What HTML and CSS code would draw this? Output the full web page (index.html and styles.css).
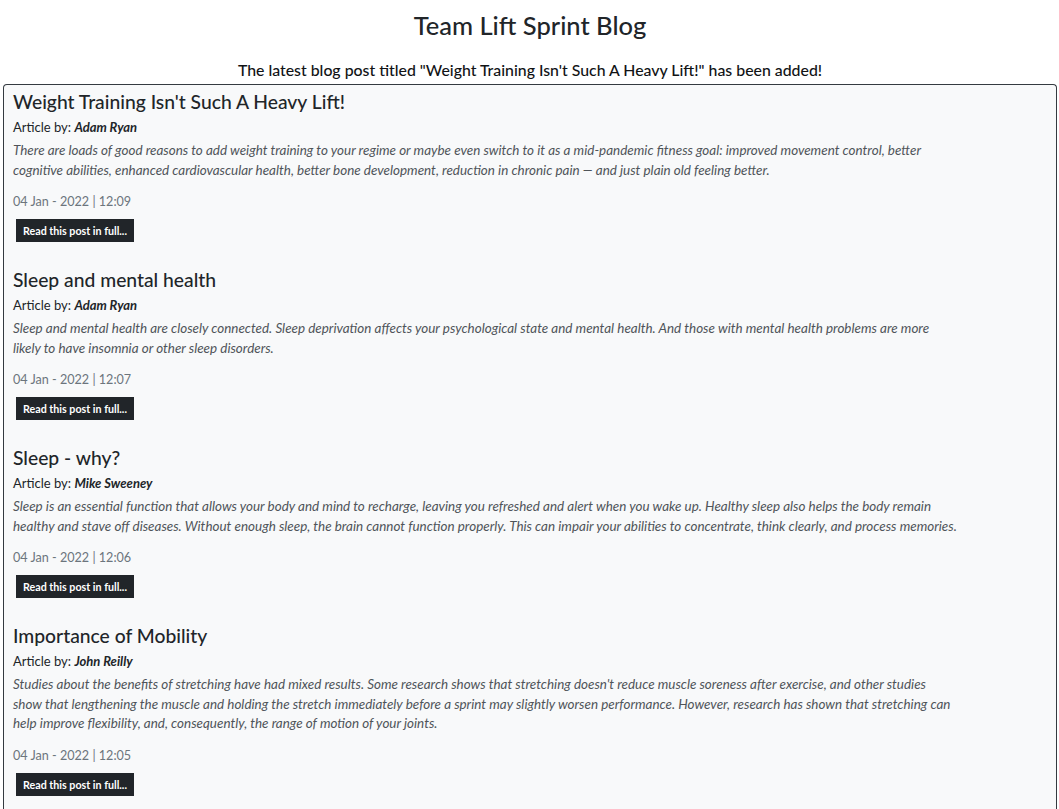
FILE: index.html
```html
<!DOCTYPE html>
<html lang="en">
<head>
<meta charset="utf-8">
<title>Team Lift Sprint Blog</title>
<link rel="stylesheet" href="styles.css">
</head>
<body>
<header class="page-head">
  <h1 class="site-title">Team Lift Sprint Blog</h1>
  <p class="notice">The latest blog post titled "Weight Training Isn't Such A Heavy Lift!" has been added!</p>
</header>
<main class="posts">
  <article class="post">
    <h2 class="post-title">Weight Training Isn't Such A Heavy Lift!</h2>
    <p class="author">Article by: <em>Adam Ryan</em></p>
    <p class="excerpt">There are loads of good reasons to add weight training to your regime or maybe even switch to it as a mid-pandemic fitness goal: improved movement control, better cognitive abilities, enhanced cardiovascular health, better bone development, reduction in chronic pain — and just plain old feeling better.</p>
    <p class="date">04 Jan - 2022 | 12:09</p>
    <a class="btn" href="#">Read this post in full...</a>
  </article>
  <article class="post">
    <h2 class="post-title">Sleep and mental health</h2>
    <p class="author">Article by: <em>Adam Ryan</em></p>
    <p class="excerpt">Sleep and mental health are closely connected. Sleep deprivation affects your psychological state and mental health. And those with mental health problems are more likely to have insomnia or other sleep disorders.</p>
    <p class="date">04 Jan - 2022 | 12:07</p>
    <a class="btn" href="#">Read this post in full...</a>
  </article>
  <article class="post">
    <h2 class="post-title">Sleep - why?</h2>
    <p class="author">Article by: <em>Mike Sweeney</em></p>
    <p class="excerpt">Sleep is an essential function that allows your body and mind to recharge, leaving you refreshed and alert when you wake up. Healthy sleep also helps the body remain healthy and stave off diseases. Without enough sleep, the brain cannot function properly. This can impair your abilities to concentrate, think clearly, and process memories.</p>
    <p class="date">04 Jan - 2022 | 12:06</p>
    <a class="btn" href="#">Read this post in full...</a>
  </article>
  <article class="post">
    <h2 class="post-title">Importance of Mobility</h2>
    <p class="author">Article by: <em>John Reilly</em></p>
    <p class="excerpt">Studies about the benefits of stretching have had mixed results. Some research shows that stretching doesn't reduce muscle soreness after exercise, and other studies show that lengthening the muscle and holding the stretch immediately before a sprint may slightly worsen performance. However, research has shown that stretching can help improve flexibility, and, consequently, the range of motion of your joints.</p>
    <p class="date">04 Jan - 2022 | 12:05</p>
    <a class="btn" href="#">Read this post in full...</a>
  </article>
</main>
</body>
</html>
```
FILE: styles.css
```css
html, body {
  margin: 0;
  padding: 0;
  background: #ffffff;
}
body {
  font-family: Lato, "Liberation Sans", sans-serif;
  color: #212529;
  padding: 0 2px 0 3px;
}
.page-head {
  text-align: center;
  padding-top: 7px;
}
.site-title {
  margin: 0;
  font-size: 25.5px;
  font-weight: 500;
  line-height: 36px;
}
.notice {
  margin: 16px 0 0;
  font-size: 15.85px;
  font-weight: 500;
  line-height: 22px;
  color: #111315;
}
.posts {
  margin-top: 3px;
  background: #f8f9fa;
  border: 1px solid #343a40;
  border-bottom: none;
  border-radius: 4px 4px 0 0;
  padding: 5px 9px 40px;
  display: flex;
  flex-direction: column;
  gap: 26px;
}
.post {
  display: flex;
  flex-direction: column;
  align-items: flex-start;
}
.post-title {
  margin: 0;
  font-size: 19.3px;
  font-weight: 500;
  line-height: 24px;
}
.author {
  margin: 3px 0 0;
  font-size: 13px;
  line-height: 20px;
}
.author em {
  font-weight: 700;
}
.excerpt {
  margin: 4px 0 0;
  max-width: 944.5px;
  font-size: 13.45px;
  line-height: 19.5px;
  font-style: italic;
  color: #4f5459;
}
.date {
  margin: 12px 0 0;
  font-size: 12.6px;
  line-height: 20px;
  color: #6c757d;
}
.btn {
  margin: 7px 0 0 3px;
  display: inline-block;
  background: #212529;
  color: #ffffff;
  font-size: 10.7px;
  font-weight: 700;
  line-height: 23px;
  padding: 0 7px;
  text-decoration: none;
}
```
